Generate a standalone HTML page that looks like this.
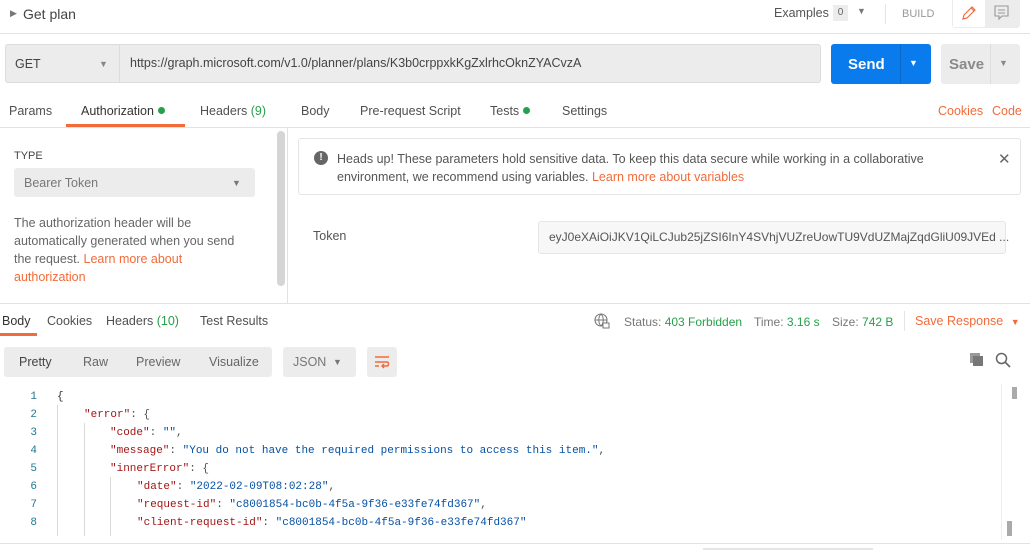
<!DOCTYPE html>
<html><head><meta charset="utf-8"><style>
*{box-sizing:border-box;margin:0;padding:0}
body{width:1030px;height:550px;overflow:hidden;background:#fff;font-family:"Liberation Sans",sans-serif;color:#505050;font-size:12.5px;position:relative}
.a{position:absolute;white-space:nowrap}
.or{color:#f26b3a}.gr{color:#26a04a}
.dot{display:inline-block;width:7px;height:7px;border-radius:50%;background:#26a04a;margin-left:4px;vertical-align:1px}
.code{font-family:"Liberation Mono",monospace;font-size:11px}
.k{color:#a31515}.s{color:#0451a5}.ln{color:#237893;width:20px;text-align:right}
.gl{position:absolute;width:1px;background:#d8d8d8}
</style></head><body>
<div class="a" style="left:10px;top:8px;font-size:9px;color:#777">▶</div>
<div class="a" style="left:23px;top:6px;font-size:14px;color:#444">Get plan</div>
<div class="a" style="left:774px;top:6px;font-size:12.5px;color:#555">Examples</div>
<div class="a" style="left:833px;top:5px;width:15px;height:16px;background:#ececec;font-size:10px;text-align:center;line-height:16px;color:#666">0</div>
<div class="a" style="left:857px;top:6px;font-size:9px;color:#777">▼</div>
<div class="a" style="left:885px;top:4px;width:1px;height:20px;background:#e5e5e5"></div>
<div class="a" style="left:902px;top:8px;font-size:11px;color:#999">BUILD</div>
<div class="a" style="left:952px;top:0;width:68px;height:28px;background:#ececec;border-radius:0 0 3px 3px"></div>
<div class="a" style="left:953px;top:0;width:32px;height:27px;background:#fff"></div>
<svg class="a" style="left:960px;top:4px" width="18" height="18" viewBox="0 0 18 18"><path d="M3 15 L4 11 L12 3 L15 6 L7 14 Z M11 4 L14 7" fill="none" stroke="#f26b3a" stroke-width="1.2"/></svg>
<svg class="a" style="left:993px;top:4px" width="18" height="18" viewBox="0 0 18 18"><path d="M2 2 H15 V12 H9 L6 15 V12 H2 Z M5 6 H12 M5 9 H12" fill="none" stroke="#999" stroke-width="1.1"/></svg>
<div class="a" style="left:0;top:33px;width:1030px;height:1px;background:#e2e2e2"></div>
<div class="a" style="left:5px;top:44px;width:816px;height:39px;background:#ececec;border:1px solid #dcdcdc;border-radius:3px"></div>
<div class="a" style="left:119px;top:45px;width:1px;height:37px;background:#dcdcdc"></div>
<div class="a" style="left:15px;top:57px;font-size:12.5px;color:#444">GET</div>
<div class="a" style="left:99px;top:59px;font-size:9px;color:#888">▼</div>
<div class="a" style="left:130px;top:56px;font-size:12.5px;color:#444">https://graph.microsoft.com/v1.0/planner/plans/K3b0crppxkKgZxlrhcOknZYACvzA</div>
<div class="a" style="left:831px;top:44px;width:100px;height:40px;background:#097bed;border-radius:3px"></div>
<div class="a" style="left:900px;top:44px;width:1px;height:40px;background:#0a68c8"></div>
<div class="a" style="left:848px;top:56px;font-size:15px;font-weight:bold;color:#fff">Send</div>
<div class="a" style="left:909px;top:58px;font-size:9px;color:#fff">▼</div>
<div class="a" style="left:941px;top:44px;width:79px;height:40px;background:#ececec;border-radius:3px"></div>
<div class="a" style="left:990px;top:44px;width:1px;height:40px;background:#ddd"></div>
<div class="a" style="left:949px;top:56px;font-size:15px;font-weight:bold;color:#8a8a8a">Save</div>
<div class="a" style="left:999px;top:58px;font-size:9px;color:#888">▼</div>
<div class="a" style="left:9px;top:104px">Params</div>
<div class="a" style="left:81px;top:104px;color:#333">Authorization<span class="dot"></span></div>
<div class="a" style="left:66px;top:124px;width:119px;height:3px;background:#f26b3a"></div>
<div class="a" style="left:200px;top:104px">Headers <span class="gr">(9)</span></div>
<div class="a" style="left:301px;top:104px">Body</div>
<div class="a" style="left:360px;top:104px">Pre-request Script</div>
<div class="a" style="left:490px;top:104px">Tests<span class="dot"></span></div>
<div class="a" style="left:562px;top:104px">Settings</div>
<div class="a or" style="left:938px;top:104px">Cookies</div>
<div class="a or" style="left:992px;top:104px">Code</div>
<div class="a" style="left:0;top:127px;width:1030px;height:1px;background:#e2e2e2"></div>
<div class="a" style="left:14px;top:150px;font-size:11px;color:#444">TYPE</div>
<div class="a" style="left:14px;top:168px;width:241px;height:29px;background:#ececec;border-radius:3px"></div>
<div class="a" style="left:24px;top:176px;color:#777">Bearer Token</div>
<div class="a" style="left:232px;top:178px;font-size:9px;color:#777">▼</div>
<div class="a" style="left:14px;top:214px;line-height:18px;white-space:normal;width:240px;color:#666">The authorization header will be automatically generated when you send the request. <span class="or">Learn more about authorization</span></div>
<div class="a" style="left:277px;top:131px;width:8px;height:155px;background:#d5d5d5;border-radius:4px"></div>
<div class="a" style="left:287px;top:128px;width:1px;height:175px;background:#e2e2e2"></div>
<div class="a" style="left:298px;top:138px;width:723px;height:57px;border:1px solid #e5e5e5;border-radius:3px"></div>
<div class="a" style="left:314px;top:151px;width:14px;height:14px;border-radius:50%;background:#666;color:#fff;font-size:10px;font-weight:bold;text-align:center;line-height:14px">!</div>
<div class="a" style="left:337px;top:150px;line-height:18px;color:#555">Heads up! These parameters hold sensitive data. To keep this data secure while working in a collaborative<br>environment, we recommend using variables. <span class="or">Learn more about variables</span></div>
<div class="a" style="left:998px;top:150px;font-size:15px;color:#666">✕</div>
<div class="a" style="left:313px;top:229px;color:#555">Token</div>
<div class="a" style="left:538px;top:221px;width:468px;height:33px;background:#f7f7f7;border:1px solid #e6e6e6;border-radius:3px"></div>
<div class="a" style="left:549px;top:230px;font-size:12px;color:#555">eyJ0eXAiOiJKV1QiLCJub25jZSI6InY4SVhjVUZreUowTU9VdUZMajZqdGliU09JVEd ...</div>
<div class="a" style="left:0;top:303px;width:1030px;height:1px;background:#e2e2e2"></div>
<div class="a" style="left:2px;top:314px;color:#333">Body</div>
<div class="a" style="left:0;top:333px;width:37px;height:3px;background:#f26b3a"></div>
<div class="a" style="left:47px;top:314px">Cookies</div>
<div class="a" style="left:106px;top:314px">Headers <span class="gr">(10)</span></div>
<div class="a" style="left:200px;top:314px">Test Results</div>
<svg class="a" style="left:594px;top:313px" width="16" height="16" viewBox="0 0 16 16"><circle cx="7" cy="7" r="6" fill="none" stroke="#777" stroke-width="1.1"/><path d="M1 7 H13 M7 1 C4 4 4 10 7 13 M7 1 C10 4 10 10 7 13" fill="none" stroke="#777" stroke-width="1"/><rect x="9" y="10" width="6" height="5" fill="#fff" stroke="#777"/></svg>
<div class="a" style="left:624px;top:315px;font-size:12px;color:#777">Status: <span class="gr">403 Forbidden</span></div>
<div class="a" style="left:754px;top:315px;font-size:12px;color:#777">Time: <span class="gr">3.16 s</span></div>
<div class="a" style="left:832px;top:315px;font-size:12px;color:#777">Size: <span class="gr">742 B</span></div>
<div class="a" style="left:904px;top:311px;width:1px;height:20px;background:#e5e5e5"></div>
<div class="a or" style="left:915px;top:314px">Save Response <span style="font-size:9px;margin-left:4px">▼</span></div>
<div class="a" style="left:4px;top:347px;width:268px;height:30px;background:#ececec;border-radius:3px"></div>
<div class="a" style="left:19px;top:355px;color:#444">Pretty</div>
<div class="a" style="left:83px;top:355px;color:#666">Raw</div>
<div class="a" style="left:136px;top:355px;color:#666">Preview</div>
<div class="a" style="left:209px;top:355px;color:#666">Visualize</div>
<div class="a" style="left:283px;top:347px;width:73px;height:30px;background:#ececec;border-radius:3px"></div>
<div class="a" style="left:293px;top:355px;color:#777">JSON</div>
<div class="a" style="left:333px;top:357px;font-size:9px;color:#777">▼</div>
<div class="a" style="left:367px;top:347px;width:30px;height:30px;background:#ececec;border-radius:3px"></div>
<svg class="a" style="left:373px;top:353px" width="18" height="18" viewBox="0 0 18 18"><path d="M2 4 H16 M2 9 H14 C16 9 16 13 14 13 H9 M11 11 L9 13 L11 15 M2 13 H6" fill="none" stroke="#f26b3a" stroke-width="1.5"/></svg>
<svg class="a" style="left:969px;top:352px" width="16" height="16" viewBox="0 0 16 16"><rect x="1" y="1" width="10" height="10" fill="#999"/><rect x="4" y="4" width="10" height="10" fill="#777"/></svg>
<svg class="a" style="left:995px;top:352px" width="16" height="16" viewBox="0 0 16 16"><circle cx="6.5" cy="6.5" r="5" fill="none" stroke="#666" stroke-width="1.5"/><path d="M10 10 L15 15" stroke="#666" stroke-width="1.6"/></svg>
<div class="code">
<div class="a ln" style="left:17px;top:391px">1</div><div class="a" style="left:57px;top:391px;color:#333">{</div>
<div class="a ln" style="left:17px;top:409px">2</div><div class="a" style="left:84px;top:409px"><span class="k">"error"</span>: {</div>
<div class="a ln" style="left:17px;top:427px">3</div><div class="a" style="left:110px;top:427px"><span class="k">"code"</span>: <span class="s">""</span>,</div>
<div class="a ln" style="left:17px;top:445px">4</div><div class="a" style="left:110px;top:445px"><span class="k">"message"</span>: <span class="s">"You do not have the required permissions to access this item."</span>,</div>
<div class="a ln" style="left:17px;top:463px">5</div><div class="a" style="left:110px;top:463px"><span class="k">"innerError"</span>: {</div>
<div class="a ln" style="left:17px;top:481px">6</div><div class="a" style="left:137px;top:481px"><span class="k">"date"</span>: <span class="s">"2022-02-09T08:02:28"</span>,</div>
<div class="a ln" style="left:17px;top:499px">7</div><div class="a" style="left:137px;top:499px"><span class="k">"request-id"</span>: <span class="s">"c8001854-bc0b-4f5a-9f36-e33fe74fd367"</span>,</div>
<div class="a ln" style="left:17px;top:517px">8</div><div class="a" style="left:137px;top:517px"><span class="k">"client-request-id"</span>: <span class="s">"c8001854-bc0b-4f5a-9f36-e33fe74fd367"</span></div>
</div>
<div class="gl" style="left:57px;top:405px;height:131px"></div>
<div class="gl" style="left:84px;top:423px;height:113px"></div>
<div class="gl" style="left:110px;top:477px;height:59px"></div>
<div class="a" style="left:1001px;top:384px;width:1px;height:156px;background:#eee"></div>
<div class="a" style="left:1012px;top:387px;width:5px;height:12px;background:#aaa"></div>
<div class="a" style="left:1007px;top:521px;width:5px;height:15px;background:#aaa"></div>
<div class="a" style="left:0;top:543px;width:1030px;height:1px;background:#e2e2e2"></div>
<div class="a" style="left:703px;top:548px;width:170px;height:2px;background:#e5e5e5"></div>
</body></html>
